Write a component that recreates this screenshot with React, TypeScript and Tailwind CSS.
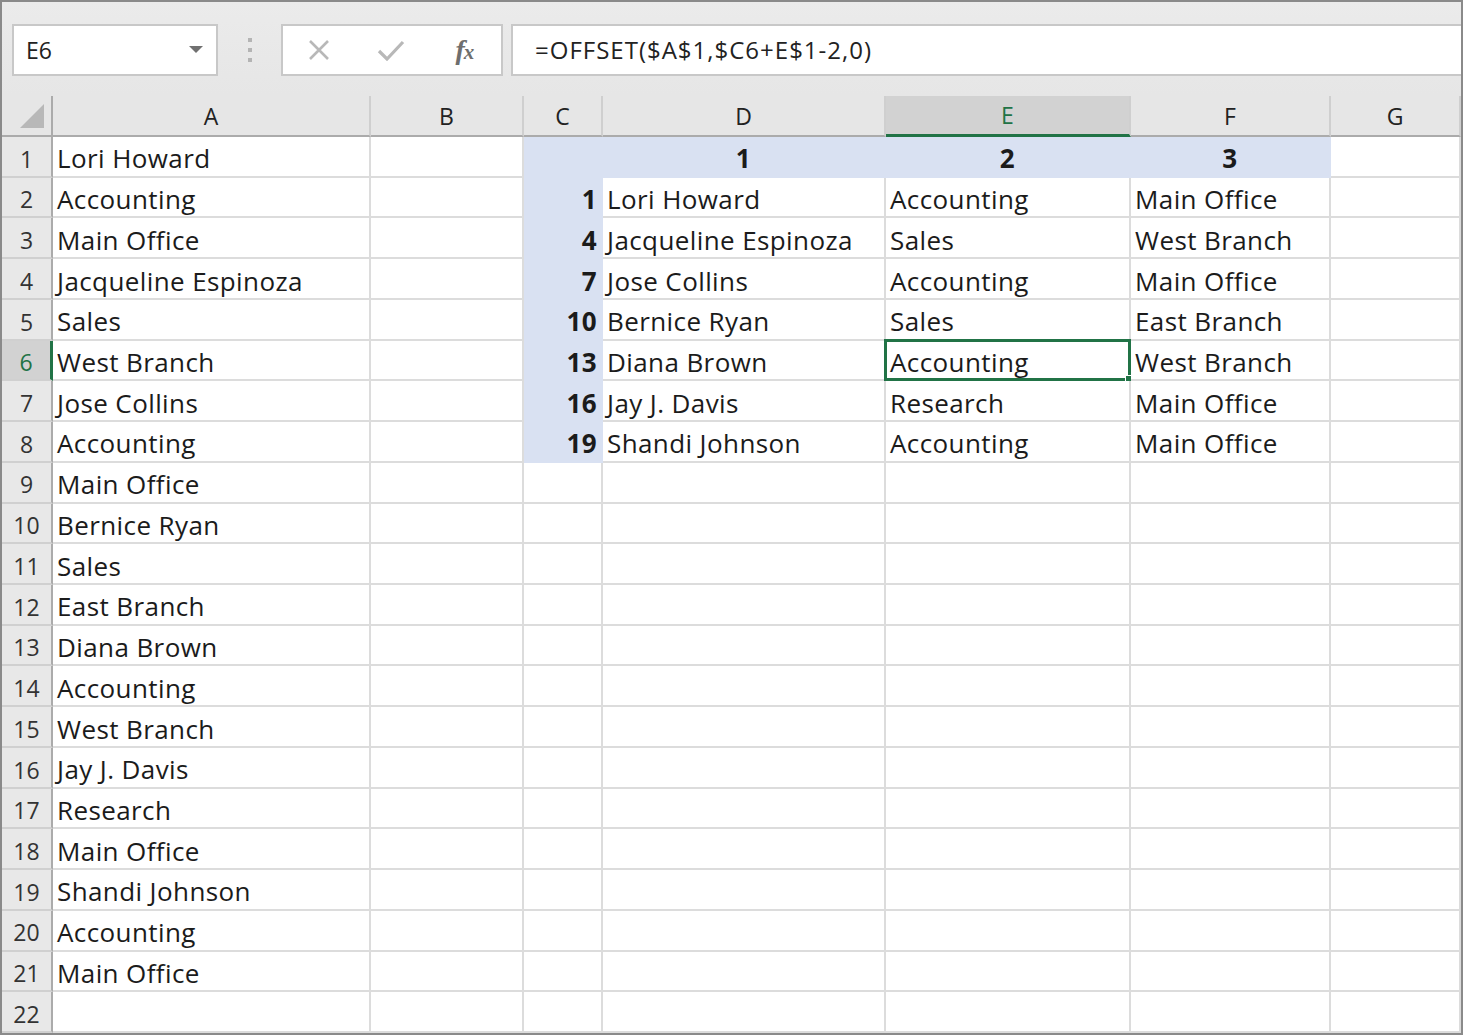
import React from "react";

const colA = [
  "Lori Howard",
  "Accounting",
  "Main Office",
  "Jacqueline Espinoza",
  "Sales",
  "West Branch",
  "Jose Collins",
  "Accounting",
  "Main Office",
  "Bernice Ryan",
  "Sales",
  "East Branch",
  "Diana Brown",
  "Accounting",
  "West Branch",
  "Jay J. Davis",
  "Research",
  "Main Office",
  "Shandi Johnson",
  "Accounting",
  "Main Office",
  "",
];

const lookup = [
  { n: "1", name: "Lori Howard", dept: "Accounting", office: "Main Office" },
  { n: "4", name: "Jacqueline Espinoza", dept: "Sales", office: "West Branch" },
  { n: "7", name: "Jose Collins", dept: "Accounting", office: "Main Office" },
  { n: "10", name: "Bernice Ryan", dept: "Sales", office: "East Branch" },
  { n: "13", name: "Diana Brown", dept: "Accounting", office: "West Branch" },
  { n: "16", name: "Jay J. Davis", dept: "Research", office: "Main Office" },
  { n: "19", name: "Shandi Johnson", dept: "Accounting", office: "Main Office" },
];

const COLS = ["A", "B", "C", "D", "E", "F", "G"];

function Cell({
  children,
  blue,
  align = "left",
  bold,
  selected,
}: {
  children?: React.ReactNode;
  blue?: boolean;
  align?: "left" | "right" | "center";
  bold?: boolean;
  selected?: boolean;
}) {
  return (
    <div
      className={
        "relative flex items-center pt-[5px] border-r-2 border-b-2 overflow-visible whitespace-nowrap text-[26px] tracking-[0.4px] text-[#1b1b1b] " +
        (blue ? "bg-[#d9e1f2] border-[#d9e1f2] " : "bg-white border-[#dcdcdc] ") +
        (align === "right" ? "justify-end pr-[4px] " : align === "center" ? "justify-center " : "pl-[4px] ") +
        (bold ? "font-bold" : "")
      }
    >
      {children}
      {selected && (
        <>
          <div className="absolute -left-[2px] -top-[2px] -right-[2px] -bottom-[2px] border-[3px] border-[#217346] pointer-events-none" />
          <div className="absolute -right-[5px] -bottom-[5px] w-[9px] h-[9px] bg-[#217346] border border-white" />
        </>
      )}
    </div>
  );
}

function RowHeader({ n, active }: { n: number; active?: boolean }) {
  return (
    <div
      className={
        "flex items-center justify-center pt-[5px] border-b-2 border-[#d0d0d0] text-[23px] " +
        (active
          ? "bg-[#d2d2d2] text-[#217346] border-r-[3px] border-r-[#217346]"
          : "bg-[#e8e8e8] text-[#333] border-r-2 border-r-[#ababab]")
      }
    >
      {n}
    </div>
  );
}

export default function App() {
  return (
    <div
      className="w-[1463px] h-[1035px] border-2 border-[#8a8a8a] bg-[#e6e6e6] overflow-hidden"
      style={{ fontFamily: "'Open Sans', 'Noto Sans', sans-serif" }}
    >
      {/* Formula bar */}
      <div className="h-[94px] flex items-start pt-[22px] bg-gradient-to-b from-[#ebebeb] to-[#e6e6e6]">
        <div className="ml-[10px] w-[206px] h-[52px] bg-white border-2 border-[#c8c8c8] flex items-center justify-between pl-[12px] pr-[13px]">
          <span className="text-[23px] text-[#222]">E6</span>
          <svg width="14" height="8" viewBox="0 0 14 8">
            <path d="M0 0 L14 0 L7 7 Z" fill="#707070" />
          </svg>
        </div>
        <div className="w-[63px] h-[52px] flex flex-col items-center justify-center gap-[6px]">
          <div className="w-[4px] h-[4px] bg-[#b4b4b4]" />
          <div className="w-[4px] h-[4px] bg-[#b4b4b4]" />
          <div className="w-[4px] h-[4px] bg-[#b4b4b4]" />
        </div>
        <div className="w-[222px] h-[52px] bg-white border-2 border-[#c8c8c8] flex items-center">
          <div className="w-[72px] flex justify-center">
            <svg width="22" height="22" viewBox="0 0 22 22">
              <path d="M2 2 L20 20 M20 2 L2 20" stroke="#b8b8b8" strokeWidth="2.6" />
            </svg>
          </div>
          <div className="w-[74px] flex justify-center">
            <svg width="28" height="22" viewBox="0 0 28 22">
              <path d="M2 12 L10 20 L26 3" stroke="#b8b8b8" strokeWidth="3.2" fill="none" />
            </svg>
          </div>
          <div className="w-[74px] flex justify-center">
            <span
              className="italic font-bold text-[28px] leading-none text-[#6e6e6e] tracking-[-1px]"
              style={{ fontFamily: "'Liberation Serif', serif" }}
            >
              f<span className="text-[21px]">x</span>
            </span>
          </div>
        </div>
        <div className="ml-[8px] flex-1 h-[52px] bg-white border-y-2 border-l-2 border-[#c8c8c8] flex items-center pl-[22px]">
          <span className="text-[24px] tracking-[1px] text-[#222]">=OFFSET($A$1,$C6+E$1-2,0)</span>
        </div>
      </div>

      {/* Grid */}
      <div className="grid grid-cols-[51px_318px_153px_79px_283px_245px_200px_130px] grid-rows-[41px_repeat(22,minmax(0,1fr))] h-[937px]">
        {/* Corner */}
        <div className="bg-[#e6e6e6] border-r-2 border-b-2 border-[#ababab] flex items-end justify-end pr-[7px] pb-[7px]">
          <svg width="24" height="24" viewBox="0 0 24 24">
            <path d="M24 0 L24 24 L0 24 Z" fill="#b8b8b8" />
          </svg>
        </div>
        {COLS.map((c) => (
          <div
            key={c}
            className={
              "flex items-center justify-center pt-[1px] text-[23px] border-r-2 border-[#cfcfcf] " +
              (c === "E"
                ? "bg-[#d2d2d2] text-[#217346] border-b-[3px] border-b-[#217346]"
                : "bg-[#e6e6e6] text-[#222] border-b-2 border-b-[#ababab]")
            }
          >
            {c}
          </div>
        ))}

        {colA.map((a, i) => {
          const r = i + 1;
          const inBlock = r >= 2 && r <= 8;
          const item = inBlock ? lookup[r - 2] : null;
          return (
            <React.Fragment key={r}>
              <RowHeader n={r} active={r === 6} />
              <Cell>{a}</Cell>
              <Cell />
              <Cell blue={r <= 8} align="right" bold>
                {item?.n}
              </Cell>
              <Cell blue={r === 1} align={r === 1 ? "center" : "left"} bold={r === 1}>
                {r === 1 ? "1" : item?.name}
              </Cell>
              <Cell blue={r === 1} align={r === 1 ? "center" : "left"} bold={r === 1} selected={r === 6}>
                {r === 1 ? "2" : item?.dept}
              </Cell>
              <Cell blue={r === 1} align={r === 1 ? "center" : "left"} bold={r === 1}>
                {r === 1 ? "3" : item?.office}
              </Cell>
              <Cell />
            </React.Fragment>
          );
        })}
      </div>
    </div>
  );
}
